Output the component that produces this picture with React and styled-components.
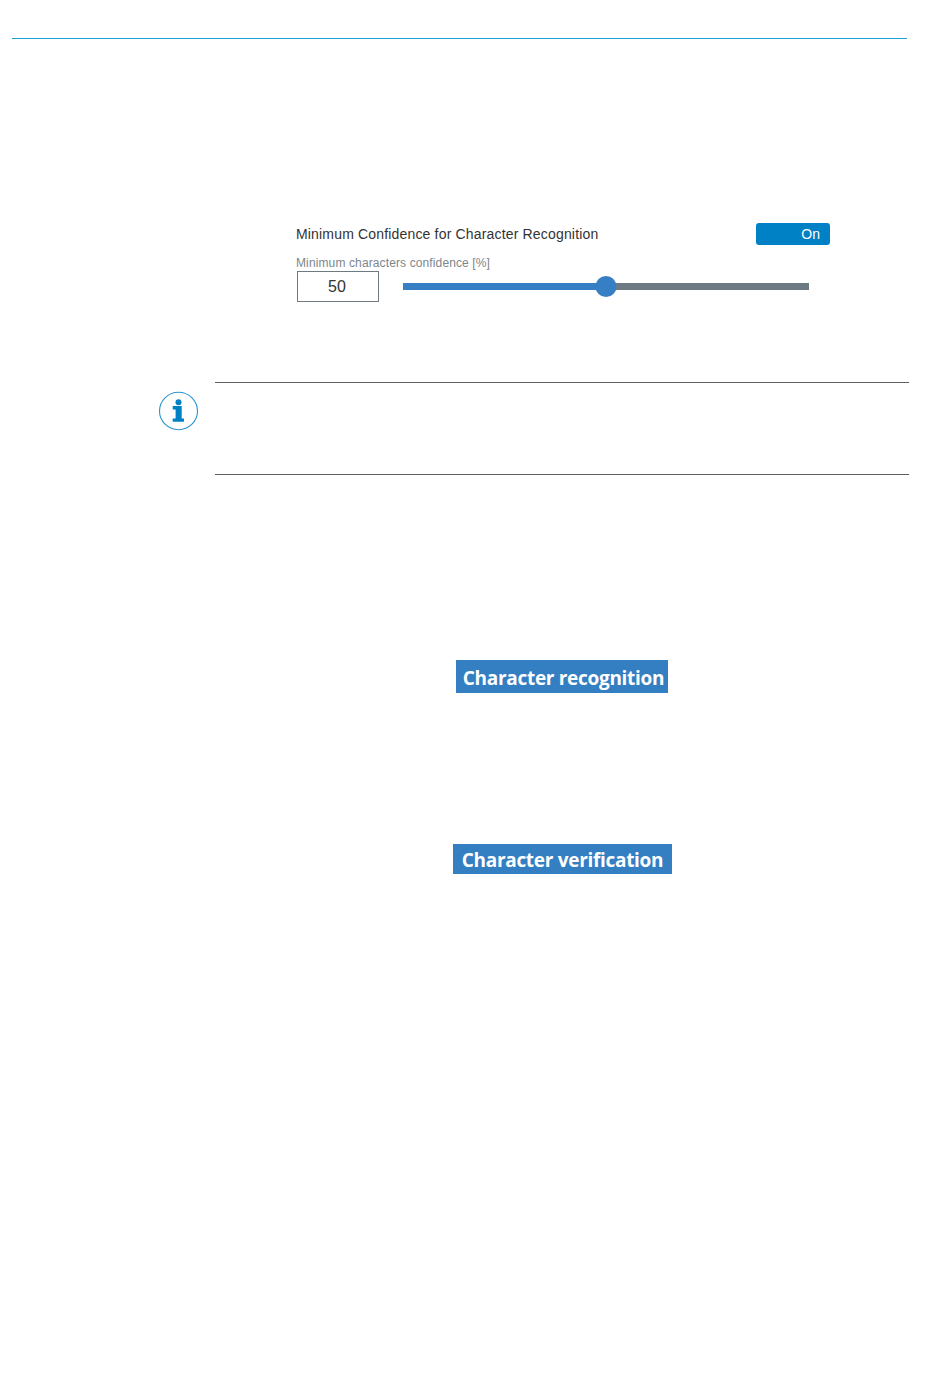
import React from "react";
import styled, { createGlobalStyle } from "styled-components";

const Global = createGlobalStyle`
  html, body { margin: 0; padding: 0; background: #fff; }
  body { font-family: "Liberation Sans", Arial, sans-serif; }
`;

const Page = styled.div`
  width: 950px;
  height: 1397px;
  box-sizing: border-box;
  padding-top: 38px;
  overflow: hidden;
`;

const HeaderRule = styled.hr`
  width: 895px;
  height: 1px;
  margin: 0 0 0 12px;
  border: 0;
  background: #1f9fd8;
`;

const Panel = styled.section`
  width: 534px;
  margin: 184px 0 0 296px;
  display: flex;
  flex-direction: column;
`;

const TitleRow = styled.div`
  display: flex;
  align-items: center;
  justify-content: space-between;
  height: 22px;
`;

const Title = styled.span`
  font-size: 14px;
  color: #333;
  letter-spacing: 0.17px;
`;

const Toggle = styled.div`
  width: 74px;
  height: 22px;
  box-sizing: border-box;
  padding-right: 10px;
  border-radius: 3px;
  background: #0080c5;
  color: #fff;
  font-size: 14px;
  line-height: 22px;
  text-align: right;
`;

const FieldLabel = styled.div`
  margin-top: 11px;
  height: 15px;
  font-size: 12px;
  line-height: 14px;
  letter-spacing: 0.12px;
  color: #7d868c;
`;

const SliderRow = styled.div`
  display: flex;
  align-items: center;
  margin-left: 1px;
`;

const ValueBox = styled.div`
  width: 82px;
  height: 31px;
  box-sizing: border-box;
  border: 1px solid #6e7a82;
  padding-right: 2px;
  font-size: 16px;
  line-height: 29px;
  text-align: center;
  color: #333;
`;

const Track = styled.div`
  position: relative;
  width: 406px;
  height: 7px;
  margin-left: 24px;
  background: #6e7a82;
`;

const TrackFill = styled.div`
  height: 100%;
  background: #377fc4;
`;

const Thumb = styled.div`
  position: absolute;
  top: -7px;
  width: 21px;
  height: 21px;
  border-radius: 50%;
  background: #377fc4;
  transform: translateX(-50%);
`;

const Note = styled.section`
  display: flex;
  align-items: flex-start;
  margin: 80px 0 0 158px;
`;

const NoteIcon = styled.svg`
  width: 41px;
  height: 41px;
  margin-top: 9px;
  flex: none;
`;

const NoteBody = styled.div`
  width: 694px;
  height: 93px;
  margin-left: 16px;
  box-sizing: border-box;
  border-top: 1px solid #5f5f5f;
  border-bottom: 1px solid #5f5f5f;
`;

const Caption = styled.div`
  display: flex;
  margin-top: ${(p) => p.$top}px;
  margin-left: ${(p) => p.$left}px;
  width: ${(p) => p.$width}px;
  height: ${(p) => p.$height}px;
  box-sizing: border-box;
  padding: 2px 0 0 ${(p) => p.$indent}px;
  align-items: center;
  justify-content: center;
  background: #347ec2;
  color: #fff;
  font-family: "Open Sans", "Noto Sans", sans-serif;
  font-weight: 700;
  font-size: 19px;
  letter-spacing: -0.3px;
  white-space: nowrap;
`;

export default function App() {
  const value = 50;
  return (
    <Page>
      <Global />
      <HeaderRule />
      <Panel>
        <TitleRow>
          <Title>Minimum Confidence for Character Recognition</Title>
          <Toggle>On</Toggle>
        </TitleRow>
        <FieldLabel>Minimum characters confidence [%]</FieldLabel>
        <SliderRow>
          <ValueBox>{value}</ValueBox>
          <Track>
            <TrackFill style={{ width: `${value}%` }} />
            <Thumb style={{ left: `${value}%` }} />
          </Track>
        </SliderRow>
      </Panel>
      <Note>
        <NoteIcon viewBox="0 0 41 41">
          <ellipse cx="20.5" cy="20" rx="19" ry="18.7" fill="none" stroke="#2a93d0" strokeWidth="1.1" />
          <circle cx="20.5" cy="11.3" r="3" fill="#0080c5" />
          <path d="M14.7 15h9v12.4h2.3v3.4h-11.3v-3.4h2.9v-9h-2.9z" fill="#0080c5" />
        </NoteIcon>
        <NoteBody />
      </Note>
      <Caption $top={185} $left={456} $width={212} $height={33} $indent={3}>Character recognition</Caption>
      <Caption $top={151} $left={453} $width={219} $height={30} $indent={0}>Character verification</Caption>
    </Page>
  );
}
